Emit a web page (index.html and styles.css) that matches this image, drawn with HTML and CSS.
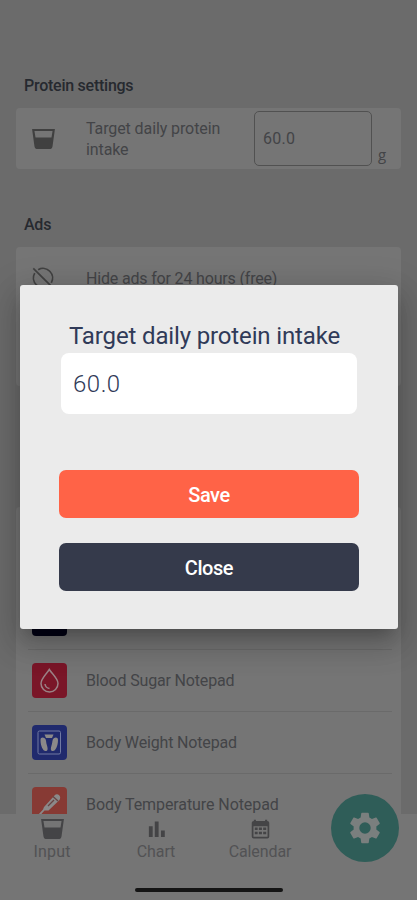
FILE: index.html
```
<!DOCTYPE html>
<html lang="en">
<head>
<meta charset="utf-8">
<title>Protein settings</title>
<link rel="stylesheet" href="styles.css">
</head>
<body>
<div class="screen">
  <main class="content">
    <h2 class="heading">Protein settings</h2>
    <section class="card target">
      <svg class="cup" viewBox="0 0 24 21"><path fill-rule="evenodd" d="M0 0H24L21.500 18Q21.100 21 18 21H6Q2.900 21 2.500 18ZM2.500 2 3.600 8.800H20.400L21.500 2Z"/></svg>
      <div class="target-label">Target daily protein<br>intake</div>
      <div class="field">60.0</div>
      <span class="unit">g</span>
    </section>
    <h2 class="heading ads-heading">Ads</h2>
    <section class="card ads">
      <div class="ads-row">
        <svg class="ban" viewBox="0 0 24 24"><path d="M7.200 3.700A9.600 9.600 0 0 1 20.300 16.800M16.800 20.300A9.600 9.600 0 0 1 3.700 7.200M2.300 2.300 21.700 21.700"/></svg>
        <span class="ads-text">Hide ads for 24 hours (free)</span>
      </div>
    </section>
    <section class="card apps">
      <div class="row"><span class="app navy"></span></div>
      <div class="row">
        <svg class="app red" viewBox="0 0 35 35"><path class="line" d="M17.300 6.500C14.500 11 9 15.500 9 20.500A8.500 8.500 0 0 0 26 20.500C26 15.500 20 11 17.300 6.500Z"/><path class="line" d="M13 21Q13.500 25 17.500 25.500"/></svg>
        <span class="sugar">Blood Sugar Notepad</span>
      </div>
      <div class="row">
        <svg class="app blue" viewBox="0 0 35 35"><rect class="frame" x="6" y="6" width="22.500" height="23" rx="1.500"/><path class="solid" d="M12.500 9.500H21.500L20 13H14Z"/><path class="solid" d="M8.500 15C8.500 11.500 12.500 12 13.700 14.500C14.500 17 14 18 15 20.500C16 24 16 26 13.500 26C11 26 8.500 21 8.500 15ZM26 15C26 11.500 22 12 20.800 14.500C20 17 20.500 18 19.500 20.500C18.500 24 18.500 26 21 26C23.500 26 26 21 26 15Z"/></svg>
        <span class="weight">Body Weight Notepad</span>
      </div>
      <div class="row">
        <svg class="app coral" viewBox="0 0 35 35"><path class="solid" d="M12 20 22.500 8.500C25 5.500 30 8.500 27.500 13L16.500 23.500 12.500 23.500 8 28.500 6.500 27.500 11 22.500Z"/><path class="mark" d="m16 19 6-6M21 9.500l5 4.500"/></svg>
        <span class="temp">Body Temperature Notepad</span>
      </div>
    </section>
  </main>
  <nav class="nav">
    <div class="tab">
      <svg class="nav-icon" viewBox="0 0 24 21"><path fill-rule="evenodd" d="M0 0H24L21.500 18Q21.100 21 18 21H6Q2.900 21 2.500 18ZM2.500 2 3.600 8.800H20.400L21.500 2Z"/></svg>
      <span class="l-input">Input</span>
    </div>
    <div class="tab">
      <svg class="nav-icon" viewBox="0 0 24 21"><path d="M4 7.500h4v11.500H4zM10.200 2.500h4V19h-4zM16.700 12h4v7h-4z"/></svg>
      <span class="l-chart">Chart</span>
    </div>
    <div class="tab">
      <svg class="nav-icon" viewBox="0 0 24 21"><path fill-rule="evenodd" d="M5 2V.8H7.200V2H16.800V.8H19V2Q21.200 2 21.200 4V18.500Q21.200 20.500 19.200 20.500H4.800Q2.800 20.500 2.800 18.500V4Q2.800 2 5 2ZM4.600 7.500V18.600H19.400V7.500Z"/><path d="M6 9H9v2.600H6zM10.300 9h3.200v2.600h-3.200zM14.800 9h3.200v2.600h-3.200zM6 13.500H9v2.600H6zM10.300 13.500h3.200v2.600h-3.200zM14.800 13.500h3.200v2.600h-3.200z"/></svg>
      <span class="l-cal">Calendar</span>
    </div>
    <div class="fab">
      <svg viewBox="0 0 24 24"><path d="M19.140 12.940c.04-.3.06-.61.06-.94s-.02-.64-.07-.94l2.030-1.580a.49.49 0 0 0 .12-.61l-1.920-3.320a.488.488 0 0 0-.59-.22l-2.390.96c-.5-.38-1.030-.7-1.620-.94l-.36-2.540a.484.484 0 0 0-.48-.41h-3.840c-.24 0-.43.17-.47.41l-.36 2.540c-.59.24-1.130.57-1.620.94l-2.390-.96c-.22-.08-.47 0-.59.22L2.740 8.870c-.12.21-.08.47.12.61l2.030 1.580c-.05.3-.09.63-.09.94s.02.64.07.94l-2.030 1.580a.49.49 0 0 0-.12.61l1.920 3.320c.12.22.37.29.59.22l2.390-.96c.5.38 1.030.7 1.620.94l.36 2.540c.05.24.24.41.48.41h3.840c.24 0 .44-.17.47-.41l.36-2.540c.59-.24 1.130-.56 1.620-.94l2.390.96c.22.08.47 0 .59-.22l1.920-3.320c.12-.22.07-.47-.12-.61zM12 15.600A3.600 3.600 0 1 1 12 8.400a3.600 3.600 0 0 1 0 7.200z"/></svg>
    </div>
    <div class="home"></div>
  </nav>
  <div class="dialog">
    <h1 class="title">Target daily protein intake</h1>
    <div class="entry">60.0</div>
    <button class="btn save">Save</button>
    <button class="btn close">Close</button>
  </div>
</div>
</body>
</html>
```
FILE: styles.css
```
* { box-sizing: border-box; }
body { margin: 0; font-family: Roboto, "Liberation Sans", sans-serif; color: #434447; }
.screen { position: relative; width: 417px; height: 900px; overflow: hidden; background: #6b6b6b; display: flex; flex-direction: column; }
.content { height: 814px; flex: none; overflow: hidden; padding: 76px 16px 0; font-size: 16px; }
.heading { margin: 0 0 12px 8px; font-size: 16px; line-height: 20px; font-weight: 500; letter-spacing: -.25px; color: #26292f; white-space: nowrap; }
.ads-heading { margin-top: 46px; }
.card { background: #757575; border-radius: 4px; }
.target { height: 61px; display: flex; align-items: center; padding: 0 15px; }
.cup { width: 23px; height: 20px; margin-left: 1px; fill: #404040; flex: none; }
.target-label { width: 168px; margin-left: 31px; line-height: 21px; letter-spacing: -.1px; white-space: nowrap; flex: none; }
.field { width: 118px; height: 55px; border: 1.500px solid #515151; border-radius: 5px; padding-left: 8px; line-height: 54px; letter-spacing: .3px; flex: none; }
.unit { margin: 31px 0 0 6px; font-family: "Open Sans", sans-serif; font-size: 15px; line-height: 20px; }
.ads { height: 139px; padding-left: 15px; }
.ads-row { height: 62px; display: flex; align-items: center; }
.ban { width: 24px; height: 24px; fill: none; stroke: #414141; stroke-width: 1.700; }
.ads-text { margin-left: 31px; letter-spacing: -.17px; }
.apps { height: 330px; margin-top: 121px; padding: 81px 9px 0 12px; }
.row { height: 62px; display: flex; align-items: center; padding-left: 4px; border-bottom: 1px solid #6a6a6a; }
.row span:not(.app) { margin-left: 19px; white-space: nowrap; }
.sugar, .weight { letter-spacing: -.16px; }
.temp { letter-spacing: -.08px; }
.app { width: 35px; height: 35px; border-radius: 4px; flex: none; }
.navy { background: #030315; }
.red { background: #7a1628; }
.blue { background: #202a6d; }
.coral { background: #873a34; }
.line { fill: none; stroke: #9b8185; stroke-width: 1.500; }
.frame { fill: none; stroke: #7079a2; stroke-width: 1; }
.solid { fill: #8b8989; }
.mark { fill: none; stroke: #684343; stroke-width: 1.300; }
.nav { position: relative; height: 86px; flex: none; background: #757575; display: flex; color: #525254; }
.tab { width: 104px; display: flex; flex-direction: column; align-items: center; padding-top: 5px; font-size: 16px; line-height: 20px; }
.l-input { letter-spacing: .2px; }
.l-chart, .l-cal { letter-spacing: -.1px; }
.nav-icon { width: 23px; height: 20px; margin-bottom: 3px; fill: #444446; }
.fab { position: absolute; left: 331px; top: -20px; width: 68px; height: 68px; border-radius: 50%; background: #2f5d58; display: flex; align-items: center; justify-content: center; }
.fab svg { width: 38px; height: 38px; fill: #7a7f7e; }
.home { position: absolute; left: 135px; top: 74px; width: 148px; height: 4px; border-radius: 2px; background: #141414; }
.dialog { position: absolute; left: 20px; top: 285px; width: 378px; height: 344px; border-radius: 3px; background: #ebebeb; box-shadow: 0 11px 15px -7px rgba(0,0,0,.2), 0 14px 30px 3px rgba(0,0,0,.14), 0 9px 35px 8px rgba(0,0,0,.1); padding: 36px 39px 0; display: flex; flex-direction: column; }
.title { margin: 0 0 3px 10px; font-size: 24px; line-height: 30px; height: 29px; font-weight: 400; color: #303a58; white-space: nowrap; letter-spacing: -.14px; }
.entry { width: 296px; height: 61px; margin-left: 2px; border-radius: 8px; background: #fff; padding-left: 12px; font-size: 24px; line-height: 62px; font-weight: 300; letter-spacing: .5px; color: #303a58; }
.btn { width: 300px; height: 48px; flex: none; border: 0; border-radius: 7px; padding: 2px 0 0; color: #fff; font: 500 20px/46px Roboto, sans-serif; letter-spacing: -.45px; }
.save { margin-top: 56px; background: #ff6347; }
.close { margin-top: 25px; background: #353a4b; }
```
